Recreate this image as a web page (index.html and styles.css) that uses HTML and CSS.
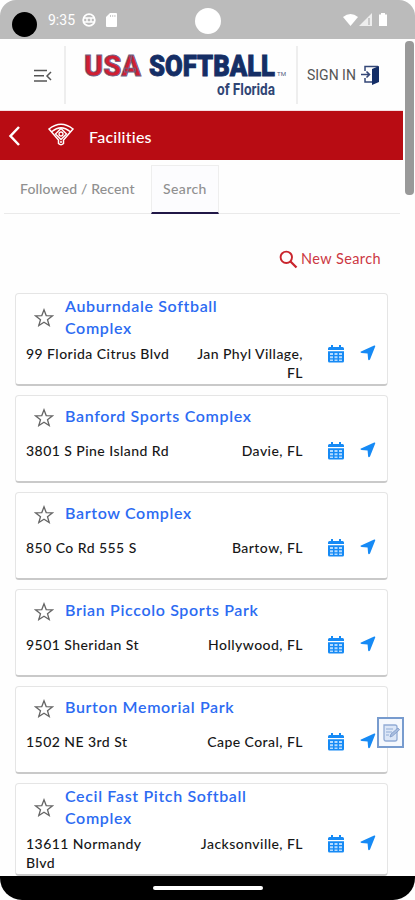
FILE: index.html
```html
<!DOCTYPE html>
<html lang="en">
<head>
<meta charset="utf-8">
<title>Facilities</title>
<link rel="stylesheet" href="styles.css">
</head>
<body>
<svg class="defs" aria-hidden="true">
  <symbol id="star" viewBox="0 0 20 20"><path d="M10 1.800l2.200 5.800 6.100.3-4.800 3.800 1.700 5.900-5.200-3.400-5.200 3.400 1.700-5.900-4.800-3.800 6.100-.3z" fill="none" stroke="#666" stroke-width="1.300"/></symbol>
  <symbol id="cal" viewBox="0 0 16 18"><path d="M3 0h2v2h6V0h2v2h1.500q1.500 0 1.500 1.500V5H0V3.500Q0 2 1.500 2H3zM0 6.300h16V16q0 1.500-1.500 1.500h-13Q0 17.500 0 16z" fill="#168af5"/><path d="M2 8h3v2H2zm4.500 0h3v2h-3zM11 8h3v2h-3zM2 11.200h3v2H2zm4.500 0h3v2h-3zm4.500 0h3v2h-3zM2 14.400h3v1.500H2zm4.500 0h3v1.500h-3zm4.500 0h3v1.500h-3z" fill="#b5dbff"/></symbol>
  <symbol id="nav" viewBox="0 0 16 16"><path d="M15.300 1.300L10 14.500q-1.400 1.600-1.900-.3L7.600 8.400 1.500 8Q-.3 7.300 1 6.400L14.200.6q1.200-.3 1.100.7z" fill="#168af5"/></symbol>
</svg>
<div class="phone">
  <header class="status">
    <i class="camera"></i>
    <span class="clock">9:35</span>
    <svg class="globe" width="14" height="14" viewBox="0 0 14 14"><circle cx="7" cy="7" r="5.800" fill="none" stroke="#fff" stroke-width="1.800"/><path d="M2 5h10M2 9h10M5 5v4M9 5v4" stroke="#fff" stroke-width="1.400"/></svg>
    <svg class="sd" width="11" height="14" viewBox="0 0 11 14"><path d="M4 0h6q1 0 1 1v12q0 1-1 1H1q-1 0-1-1V4z" fill="#fff"/><path d="M4.500 2v2M6.700 2v2M8.900 2v2" stroke="#bbb" stroke-width=".8"/></svg>
    <i class="punch"></i>
    <svg class="signals" width="46" height="15" viewBox="0 0 46 15"><path d="M0 4q7.500-6 15 0L7.500 13z" fill="#fff"/><path d="M29 0v13H16z" fill="#eee"/><path d="M26 5v7" stroke="#bbb" stroke-width="1.400"/><path d="M38 0h4v1.500h2V13h-8V1.500h2z" fill="#fff"/></svg>
  </header>
  <div class="brandbar">
    <div class="menu"><svg width="20" height="14" viewBox="0 0 20 14"><path d="M1 1.500h13M1 6.700h10M1 12h13M18 3l-4 4 4 4" fill="none" stroke="#555" stroke-width="1.500"/></svg></div>
    <div class="logo">
      <svg width="206" height="52" viewBox="0 0 206 52">
        <g class="logo-main"><text class="usa" x="0" y="27" textLength="57" lengthAdjust="spacingAndGlyphs">USA</text>
        <text class="soft" x="65" y="27" textLength="126" lengthAdjust="spacingAndGlyphs">SOFTBALL</text></g>
        <text class="tm" x="193" y="27" textLength="9" lengthAdjust="spacingAndGlyphs">TM</text>
        <text class="florida" x="133" y="46" textLength="58" lengthAdjust="spacingAndGlyphs">of Florida</text>
      </svg>
    </div>
    <div class="signin"><span>SIGN IN</span><svg width="19" height="20" viewBox="0 0 19 20"><path d="M4 6V1.500h13M4 13v4h7" fill="none" stroke="#344777" stroke-width="1.500"/><path d="M11 4l7-3v16l-7 3z" fill="#142e67"/><path d="M0 9.500h8M5.500 6.500l3 3-3 3" fill="none" stroke="#344777" stroke-width="1.600"/></svg></div>
  </div>
  <div class="titlebar">
    <svg class="back" width="13" height="22" viewBox="0 0 13 22"><path d="M11 2L2.500 11l8.500 9" fill="none" stroke="#fff" stroke-width="2.500"/></svg>
    <svg class="field" width="26" height="23" viewBox="0 0 26 23"><path d="M1 6Q13-3.500 25 6L15.500 17v3.500q-2.500 2.500-5 0V17zM4 8.500Q13 1 22 8.500" fill="none" stroke="#fff" stroke-width="1.500"/><path d="M13 5.500l5.500 5.500-5.500 5.500L7.500 11z" fill="none" stroke="#fff" stroke-width="1.400"/><circle cx="13" cy="11" r="2" fill="none" stroke="#fff" stroke-width="1.300"/><circle cx="13" cy="19" r="1" fill="#fff"/></svg>
    <h1>Facilities</h1>
  </div>
  <nav class="tabs"><span class="tab followed">Followed / Recent</span><span class="tab active">Search</span></nav>
  <div class="newsearch"><svg width="19" height="19" viewBox="0 0 19 19"><circle cx="7.300" cy="7.300" r="5.700" fill="none" stroke="#c9252d" stroke-width="1.900"/><path d="M11.500 11.500l6 6" stroke="#c9252d" stroke-width="2.300"/></svg><span>New Search</span></div>
  <main class="list">
    <article class="card tall"><div class="name"><svg><use href="#star"/></svg><a>Auburndale Softball<br>Complex</a></div><div class="info"><span class="street">99 Florida Citrus Blvd</span><span class="city">Jan Phyl Village,<br>FL</span><svg class="cal"><use href="#cal"/></svg><svg class="nav"><use href="#nav"/></svg></div></article>
    <article class="card"><div class="name"><svg><use href="#star"/></svg><a>Banford Sports Complex</a></div><div class="info"><span class="street">3801 S Pine Island Rd</span><span class="city">Davie, FL</span><svg class="cal"><use href="#cal"/></svg><svg class="nav"><use href="#nav"/></svg></div></article>
    <article class="card"><div class="name"><svg><use href="#star"/></svg><a>Bartow Complex</a></div><div class="info"><span class="street">850 Co Rd 555 S</span><span class="city">Bartow, FL</span><svg class="cal"><use href="#cal"/></svg><svg class="nav"><use href="#nav"/></svg></div></article>
    <article class="card"><div class="name"><svg><use href="#star"/></svg><a>Brian Piccolo Sports Park</a></div><div class="info"><span class="street">9501 Sheridan St</span><span class="city">Hollywood, FL</span><svg class="cal"><use href="#cal"/></svg><svg class="nav"><use href="#nav"/></svg></div></article>
    <article class="card"><div class="name"><svg><use href="#star"/></svg><a>Burton Memorial Park</a></div><div class="info"><span class="street">1502 NE 3rd St</span><span class="city">Cape Coral, FL</span><svg class="cal"><use href="#cal"/></svg><svg class="nav"><use href="#nav"/></svg></div></article>
    <article class="card tall"><div class="name"><svg><use href="#star"/></svg><a>Cecil Fast Pitch Softball<br>Complex</a></div><div class="info"><span class="street">13611 Normandy<br>Blvd</span><span class="city">Jacksonville, FL</span><svg class="cal"><use href="#cal"/></svg><svg class="nav"><use href="#nav"/></svg></div></article>
  </main>
  <footer class="gesture"><i></i></footer>
  <div class="scrollbar"></div>
  <div class="note"><svg width="18" height="18" viewBox="0 0 18 18"><path d="M2 1h11q2 0 2 2v12q0 2-2 2H4q-2 0-2-2z" fill="#dbe6f7" stroke="#91abd5" stroke-width="1.300"/><path d="M4 5h7M4 8h6M4 11h3" stroke="#91abd5" stroke-width="1.200"/><path d="M8 13l1-3 7-6 1.500 1.800-7 6.200z" fill="#a9bedf" stroke="#7c98c8" stroke-width=".8"/></svg></div>
</div>
</body>
</html>
```
FILE: styles.css
```css
* { box-sizing: border-box; }
body { margin: 0; background: #fff; font-family: Lato, "Open Sans", sans-serif; }
svg { display: block; flex: none; }
.defs { position: absolute; width: 0; height: 0; }
.phone { position: relative; width: 415px; height: 900px; overflow: hidden; display: flex; flex-direction: column; background: #fefefe; }
.status { height: 39px; flex: none; background: #bbb; border-radius: 16px 16px 0 0; display: flex; align-items: flex-start; padding-left: 12px; }
.camera { width: 25px; height: 25px; border-radius: 50%; background: #000; margin-top: 12px; }
.clock { margin: 12px 0 0 11px; width: 34px; font: 14px/17px Roboto, sans-serif; color: #fff; }
.globe { margin-top: 13px; }
.sd { margin: 13px 0 0 10px; }
.punch { width: 26px; height: 26px; border-radius: 50%; background: #fff; margin: 8px 0 0 78px; }
.signals { margin: 13px 0 0 122px; }
.brandbar { height: 72px; flex: none; display: flex; align-items: center; width: 403px; border-bottom: 1px solid #f5dfe1; }
.menu { width: 66px; height: 58px; border-right: 2px solid #eee; display: flex; align-items: center; padding: 2px 0 0 33px; }
.logo { width: 232px; height: 58px; border-right: 2px solid #eee; padding: 3px 0 0 18px; }
.logo svg { overflow: visible; }
.logo text { font-family: Roboto, sans-serif; }
.logo-main text { font-size: 29px; font-weight: 900; stroke-width: .9; }
.logo .usa { fill: #d11f32; stroke: #6f6284; }
.logo .soft { fill: #152e65; stroke: #152e65; }
.logo .tm { font-size: 6px; fill: #526080; }
.logo .florida { font-size: 16px; font-weight: 700; fill: #304574; }
.signin { display: flex; align-items: center; gap: 5px; padding-left: 9px; font: 14px Roboto, sans-serif; color: #555; }
.signin span { width: 49px; letter-spacing: 0; white-space: nowrap; }
.titlebar { height: 49px; flex: none; width: 403px; background: #b80c13; display: flex; align-items: center; color: #fff; padding-left: 8px; }
.field { margin: -3px 0 0 27px; }
h1 { margin: 1px 0 0 15px; font-size: 16px; font-weight: 500; letter-spacing: .25px; }
.tabs { height: 54px; flex: none; margin: 0 15px 0 4px; padding-top: 5px; display: flex; border-bottom: 1px solid #eaeaea; color: #909090; font-size: 14px; font-weight: 500; }
.tab { height: 49px; line-height: 48px; white-space: nowrap; }
.followed { width: 147px; padding-left: 16px; letter-spacing: .15px; }
.active { width: 68px; padding-left: 11px; background: #fcfcfe; border: 1px solid #eee; border-bottom: 2px solid #211747; line-height: 46px; letter-spacing: .4px; }
.newsearch { height: 79px; flex: none; display: flex; justify-content: flex-end; align-items: center; gap: 3px; width: 381px; padding-top: 11px; color: #cc3843; font-size: 14.500px; letter-spacing: .4px; }
.newsearch span { margin-top: -2px; }
.list { display: flex; flex-direction: column; gap: 9px; padding-left: 15px; width: 388px; height: 583px; flex: none; }
.card { height: 88px; flex: none; border: 1px solid #e5e5e5; border-bottom: 2px solid #c9c9c9; border-radius: 4px; background: #fff; }
.card.tall { height: 93px; }
.name { height: 42px; display: flex; align-items: center; gap: 11px; padding-left: 18px; }
.tall .name { height: 46px; }
.name svg { width: 20px; height: 20px; margin-top: 2px; }
.name a { color: #2c6bf2; font-size: 16px; line-height: 22.500px; font-weight: 600; letter-spacing: .65px; white-space: nowrap; }
.card:not(.tall) .name a { margin-top: -1px; }
.info { display: grid; grid-template-columns: 158px 119px 16px 16px; font-size: 14px; line-height: 19px; font-weight: 500; letter-spacing: .45px; color: #171717; padding: 3px 0 0 10px; align-items: start; }
.tall .info { padding-top: 4px; }
.street, .city { white-space: nowrap; }
.city { text-align: right; }
.cal { width: 16px; height: 18px; margin-left: 25px; margin-top: 1px; }
.nav { width: 16px; height: 16px; margin-left: 41px; margin-top: 1px; }
.gesture { height: 24px; flex: none; background: #000; border-radius: 0 0 22px 22px; display: flex; justify-content: center; padding-top: 10px; }
.gesture i { width: 110px; height: 4px; border-radius: 2px; background: #fff; }
.scrollbar { position: absolute; left: 405px; top: 41px; width: 9px; height: 154px; border-radius: 4px; background: #999; }
.note { position: absolute; left: 377px; top: 717px; width: 27px; height: 31px; border: 2px solid #779bce; background: #f5f8fd; display: flex; align-items: center; justify-content: center; }
```
